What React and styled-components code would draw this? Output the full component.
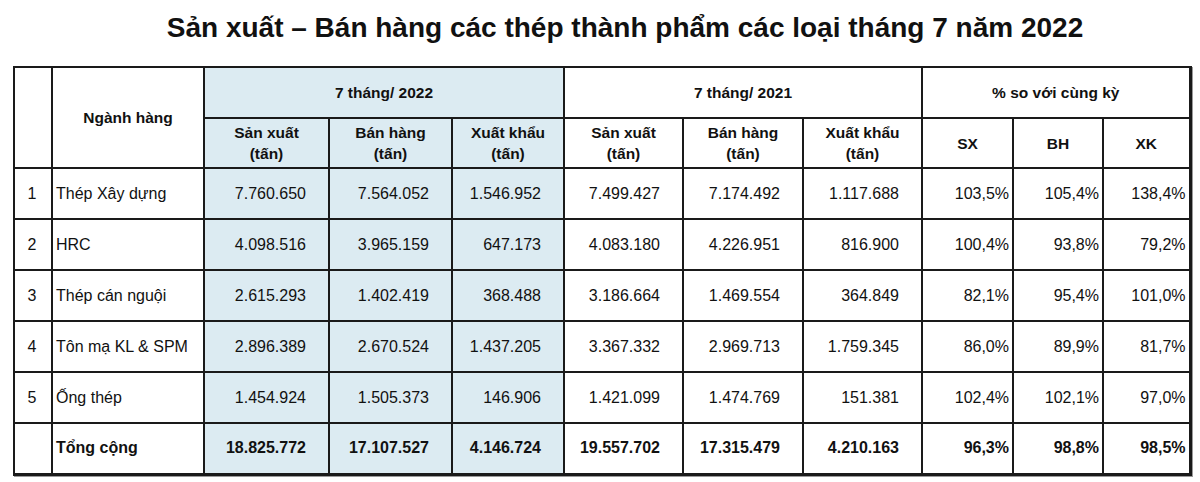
import React from "react";
import styled, { createGlobalStyle } from "styled-components";

const GlobalStyle = createGlobalStyle`
  body {
    margin: 0;
    background: #ffffff;
    font-family: "Liberation Sans", Arial, Helvetica, sans-serif;
    color: #111111;
  }
`;

const Page = styled.div`
  width: 1200px;
  height: 482px;
  overflow: hidden;
`;

const Title = styled.h1`
  margin: 0;
  height: 66px;
  padding: 12px 0 0 50px;
  box-sizing: border-box;
  text-align: center;
  font-size: 28px;
  font-weight: 700;
  color: #111111;
  line-height: 32px;
`;

const Table = styled.table`
  margin-left: 13px;
  table-layout: fixed;
  border-collapse: collapse;
  width: 1176px;
  border-top: 2px solid #1a1a1a;
  border-left: 2px solid #1a1a1a;
  border-right: 3px solid #1a1a1a;
  border-bottom: 3px solid #1a1a1a;
  box-shadow: 1px 1px 0 #9a9a9a;
  font-size: 16px;
`;

const Row = styled.tr`
  height: ${(p) => p.$h || 51}px;
`;

const Cell = styled.td`
  border: 2px solid #1a1a1a;
  padding: 0;
  background: ${(p) => (p.$blue ? "#dcebf2" : "#ffffff")};
  font-weight: ${(p) => (p.$bold ? 700 : 400)};
  vertical-align: middle;
  white-space: nowrap;
`;

const HeadCell = styled(Cell)`
  font-weight: 700;
  font-size: 15.5px;
  line-height: 21px;
  text-align: center;
`;

const NoCell = styled(Cell)`
  text-align: center;
  padding-right: 2px;
`;

const NameCell = styled(Cell)`
  text-align: left;
  padding-left: 3px;
`;

const NumCell = styled(Cell)`
  text-align: right;
  padding-right: 22px;
`;

const PctCell = styled(Cell)`
  text-align: right;
  padding-right: 3px;
`;

const widths = [38, 152, 125, 123, 112, 119, 120, 119, 91, 90, 87];

const rows = [
  ["1", "Thép Xây dựng", "7.760.650", "7.564.052", "1.546.952", "7.499.427", "7.174.492", "1.117.688", "103,5%", "105,4%", "138,4%"],
  ["2", "HRC", "4.098.516", "3.965.159", "647.173", "4.083.180", "4.226.951", "816.900", "100,4%", "93,8%", "79,2%"],
  ["3", "Thép cán nguội", "2.615.293", "1.402.419", "368.488", "3.186.664", "1.469.554", "364.849", "82,1%", "95,4%", "101,0%"],
  ["4", "Tôn mạ KL & SPM", "2.896.389", "2.670.524", "1.437.205", "3.367.332", "2.969.713", "1.759.345", "86,0%", "89,9%", "81,7%"],
  ["5", "Ống thép", "1.454.924", "1.505.373", "146.906", "1.421.099", "1.474.769", "151.381", "102,4%", "102,1%", "97,0%"],
];

const total = ["", "Tổng cộng", "18.825.772", "17.107.527", "4.146.724", "19.557.702", "17.315.479", "4.210.163", "96,3%", "98,8%", "98,5%"];

const DataRow = ({ data, bold }) => (
  <Row>
    <NoCell $bold={bold}>{data[0]}</NoCell>
    <NameCell $bold={bold}>{data[1]}</NameCell>
    {data.slice(2, 8).map((v, i) => (
      <NumCell key={i} $bold={bold} $blue={i < 3}>
        {v}
      </NumCell>
    ))}
    {data.slice(8).map((v, i) => (
      <PctCell key={i} $bold={bold}>
        {v}
      </PctCell>
    ))}
  </Row>
);

const SubHead = ({ blue }) => (
  <>
    <HeadCell $blue={blue}>
      Sản xuất
      <br />
      (tấn)
    </HeadCell>
    <HeadCell $blue={blue}>
      Bán hàng
      <br />
      (tấn)
    </HeadCell>
    <HeadCell $blue={blue}>
      Xuất khẩu
      <br />
      (tấn)
    </HeadCell>
  </>
);

export default function App() {
  return (
    <Page>
      <GlobalStyle />
      <Title>Sản xuất – Bán hàng các thép thành phẩm các loại tháng 7 năm 2022</Title>
      <Table>
        <colgroup>
          {widths.map((w, i) => (
            <col key={i} style={{ width: w }} />
          ))}
        </colgroup>
        <tbody>
          <Row $h={51}>
            <HeadCell rowSpan={2} />
            <HeadCell rowSpan={2}>Ngành hàng</HeadCell>
            <HeadCell colSpan={3} $blue>
              7 tháng/ 2022
            </HeadCell>
            <HeadCell colSpan={3}>7 tháng/ 2021</HeadCell>
            <HeadCell colSpan={3}>% so với cùng kỳ</HeadCell>
          </Row>
          <Row $h={50}>
            <SubHead blue />
            <SubHead />
            <HeadCell>SX</HeadCell>
            <HeadCell>BH</HeadCell>
            <HeadCell>XK</HeadCell>
          </Row>
          {rows.map((r) => (
            <DataRow key={r[0]} data={r} />
          ))}
          <DataRow data={total} bold />
        </tbody>
      </Table>
    </Page>
  );
}
